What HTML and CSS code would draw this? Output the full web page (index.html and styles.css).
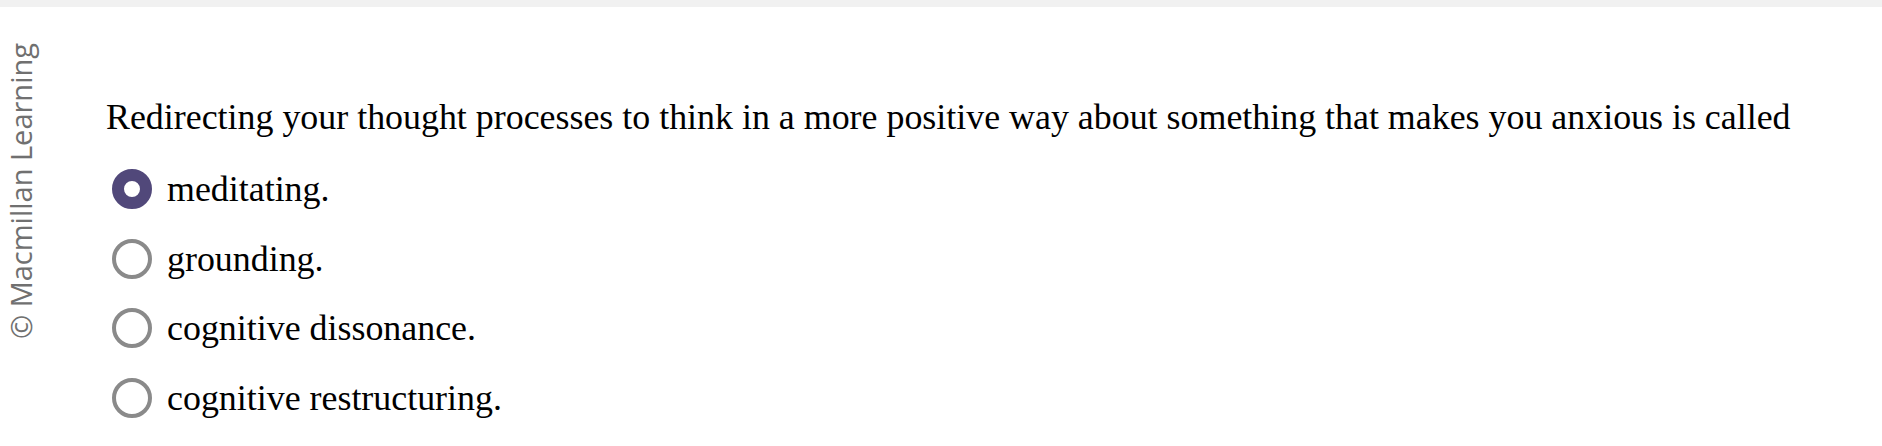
FILE: index.html
```html
<!DOCTYPE html>
<html lang="en">
<head>
<meta charset="utf-8">
<title>Question</title>
<link rel="stylesheet" href="styles.css">
</head>
<body>
<div class="topbar"></div>
<div class="main">
  <aside class="sidebar"><span class="copyright">© Macmillan Learning</span></aside>
  <section class="content">
    <p class="question">Redirecting your thought processes to think in a more positive way about something that makes you anxious is called</p>
    <div class="options">
      <label class="option"><span class="radio checked"></span><span class="opt-text">meditating.</span></label>
      <label class="option"><span class="radio"></span><span class="opt-text">grounding.</span></label>
      <label class="option"><span class="radio"></span><span class="opt-text">cognitive dissonance.</span></label>
      <label class="option"><span class="radio"></span><span class="opt-text">cognitive restructuring.</span></label>
    </div>
  </section>
</div>
</body>
</html>
```
FILE: styles.css
```css
html, body {
  margin: 0;
  padding: 0;
  background: #ffffff;
}
.topbar {
  height: 7px;
  background: #f1f1f1;
}
.main {
  display: flex;
}
.sidebar {
  width: 60px;
  padding-top: 36px;
  padding-left: 1px;
  box-sizing: border-box;
}
.copyright {
  display: block;
  writing-mode: vertical-rl;
  text-orientation: sideways;
  transform: rotate(180deg);
  font-family: "Open Sans", "Noto Sans", sans-serif;
  font-size: 29px;
  line-height: normal;
  color: #707070;
  white-space: nowrap;
}
.content {
  padding-top: 89px;
  padding-left: 46px;
  font-family: "Liberation Serif", "Times New Roman", serif;
  font-size: 35.9px;
  color: #000;
}
.question {
  margin: 0;
  line-height: normal;
}
.options {
  margin-top: 16px;
  display: flex;
  flex-direction: column;
}
.option {
  display: flex;
  align-items: center;
  height: 69.7px;
  gap: 15px;
  padding-left: 6px;
}
.opt-text {
  line-height: normal;
}
.radio {
  width: 40px;
  height: 40px;
  box-sizing: border-box;
  border-radius: 50%;
  border: 4px solid #8a8a8a;
  background: #fff;
  flex: none;
}
.radio.checked {
  border: 12.5px solid #51487a;
  background: #fff;
}
```
